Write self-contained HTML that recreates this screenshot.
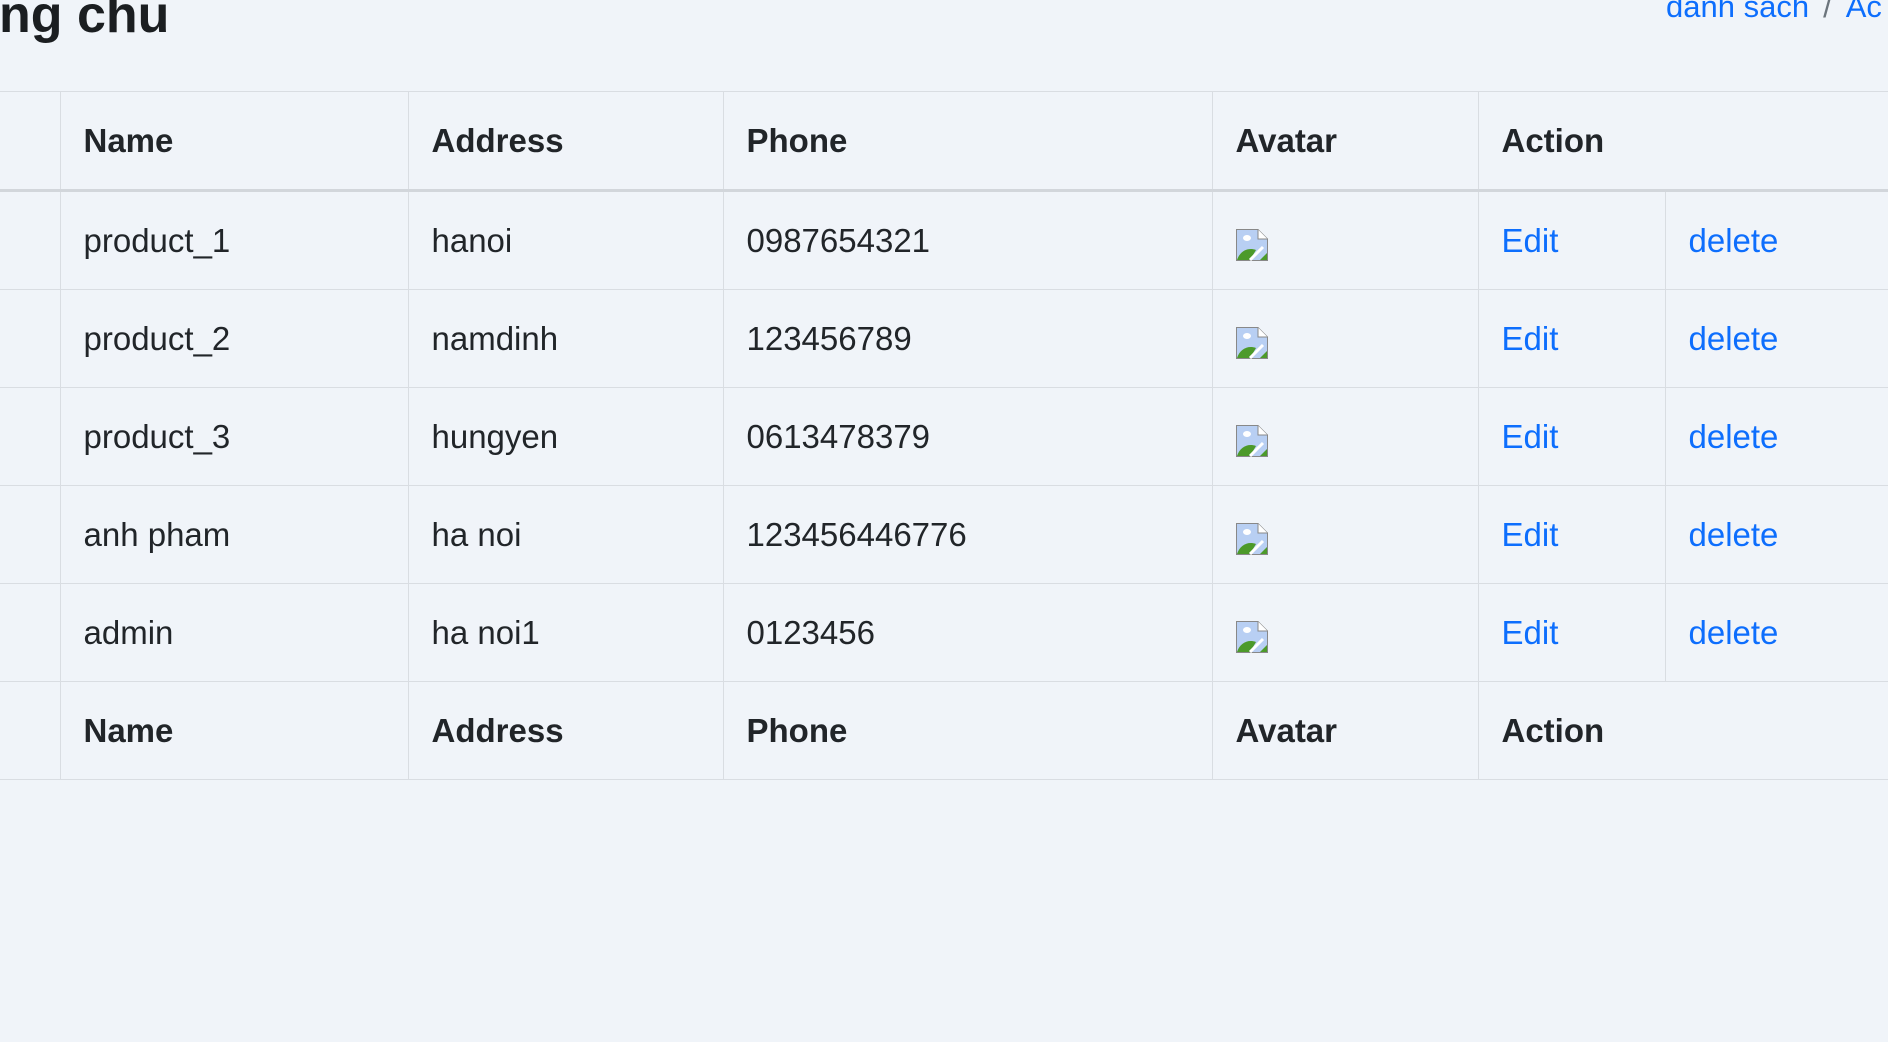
<!DOCTYPE html>
<html><head><meta charset="utf-8">
<style>
html,body{margin:0;padding:0;width:1888px;height:1042px;overflow:hidden;background:#f0f4f9;font-family:"Liberation Sans",sans-serif;color:#212529;}
.title{position:absolute;left:-1px;top:-15px;font-size:52px;font-weight:bold;line-height:60px;color:#1b1e21;white-space:nowrap;}
.bc{position:absolute;left:1666px;top:-11px;font-size:31px;line-height:36px;white-space:nowrap;color:#0d6efd;}
.bc span{color:#6c757d;margin:0 14px;}
table{position:absolute;left:0;top:91px;border-collapse:collapse;table-layout:fixed;font-size:33px;width:2100px;}
td,th{border:1.5px solid #d9dde2;height:97px;padding:0 0 0 23px;text-align:left;vertical-align:middle;white-space:nowrap;}
th{font-weight:bold;}
thead th{border-bottom:3px solid #d2d6db;}
tr>*:first-child{border-left:none;padding:0;}
a{color:#0d6efd;text-decoration:none;}
.img{display:inline-block;vertical-align:middle;margin-top:6px;}
</style></head><body>
<div class="title">ng chu</div>
<div class="bc">danh sach<span>/</span>Ac</div>
<table>
<colgroup><col style="width:60px"><col style="width:348px"><col style="width:315px"><col style="width:489px"><col style="width:266px"><col style="width:187px"><col style="width:435px"></colgroup>
<thead><tr><th></th><th>Name</th><th>Address</th><th>Phone</th><th>Avatar</th><th colspan="2">Action</th></tr></thead>
<tbody>
<tr><td></td><td>product_1</td><td>hanoi</td><td>0987654321</td><td><svg class="img" width="32" height="32" viewBox="0 0 32 32"><path d="M.5 .5H22L31.5 10V31.5H.5Z" fill="#b8cff3" stroke="#888"/><path d="M22 .5V10H31.5" fill="#fff" stroke="#888"/><ellipse cx="11" cy="9" rx="4" ry="3" fill="#fff"/><path d="M1 31C4 22 12 18 20 21L14 31Z" fill="#4c9a2a"/><path d="M24 31L31 24V31Z" fill="#4c9a2a"/><path d="M14 31L27 18" stroke="#fff" stroke-width="3"/></svg></td><td><a>Edit</a></td><td><a>delete</a></td></tr>
<tr><td></td><td>product_2</td><td>namdinh</td><td>123456789</td><td><svg class="img" width="32" height="32" viewBox="0 0 32 32"><path d="M.5 .5H22L31.5 10V31.5H.5Z" fill="#b8cff3" stroke="#888"/><path d="M22 .5V10H31.5" fill="#fff" stroke="#888"/><ellipse cx="11" cy="9" rx="4" ry="3" fill="#fff"/><path d="M1 31C4 22 12 18 20 21L14 31Z" fill="#4c9a2a"/><path d="M24 31L31 24V31Z" fill="#4c9a2a"/><path d="M14 31L27 18" stroke="#fff" stroke-width="3"/></svg></td><td><a>Edit</a></td><td><a>delete</a></td></tr>
<tr><td></td><td>product_3</td><td>hungyen</td><td>0613478379</td><td><svg class="img" width="32" height="32" viewBox="0 0 32 32"><path d="M.5 .5H22L31.5 10V31.5H.5Z" fill="#b8cff3" stroke="#888"/><path d="M22 .5V10H31.5" fill="#fff" stroke="#888"/><ellipse cx="11" cy="9" rx="4" ry="3" fill="#fff"/><path d="M1 31C4 22 12 18 20 21L14 31Z" fill="#4c9a2a"/><path d="M24 31L31 24V31Z" fill="#4c9a2a"/><path d="M14 31L27 18" stroke="#fff" stroke-width="3"/></svg></td><td><a>Edit</a></td><td><a>delete</a></td></tr>
<tr><td></td><td>anh pham</td><td>ha noi</td><td>123456446776</td><td><svg class="img" width="32" height="32" viewBox="0 0 32 32"><path d="M.5 .5H22L31.5 10V31.5H.5Z" fill="#b8cff3" stroke="#888"/><path d="M22 .5V10H31.5" fill="#fff" stroke="#888"/><ellipse cx="11" cy="9" rx="4" ry="3" fill="#fff"/><path d="M1 31C4 22 12 18 20 21L14 31Z" fill="#4c9a2a"/><path d="M24 31L31 24V31Z" fill="#4c9a2a"/><path d="M14 31L27 18" stroke="#fff" stroke-width="3"/></svg></td><td><a>Edit</a></td><td><a>delete</a></td></tr>
<tr><td></td><td>admin</td><td>ha noi1</td><td>0123456</td><td><svg class="img" width="32" height="32" viewBox="0 0 32 32"><path d="M.5 .5H22L31.5 10V31.5H.5Z" fill="#b8cff3" stroke="#888"/><path d="M22 .5V10H31.5" fill="#fff" stroke="#888"/><ellipse cx="11" cy="9" rx="4" ry="3" fill="#fff"/><path d="M1 31C4 22 12 18 20 21L14 31Z" fill="#4c9a2a"/><path d="M24 31L31 24V31Z" fill="#4c9a2a"/><path d="M14 31L27 18" stroke="#fff" stroke-width="3"/></svg></td><td><a>Edit</a></td><td><a>delete</a></td></tr>
</tbody>
<tfoot><tr><th></th><th>Name</th><th>Address</th><th>Phone</th><th>Avatar</th><th colspan="2">Action</th></tr></tfoot>
</table>
</body></html>
